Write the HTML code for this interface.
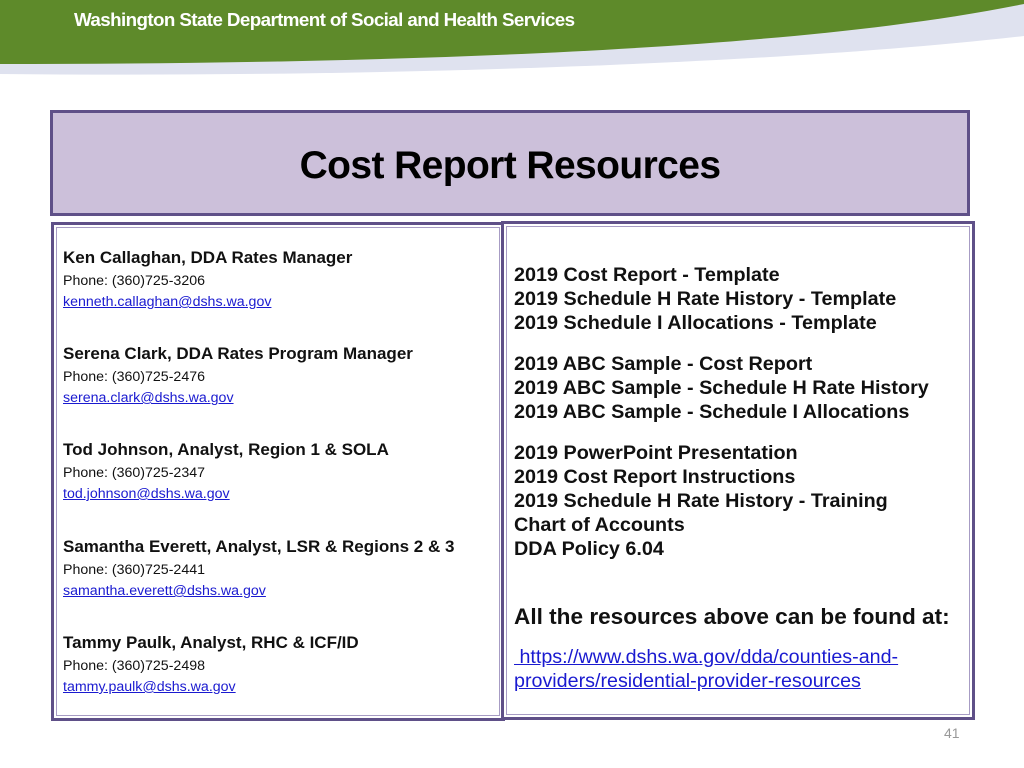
<!DOCTYPE html>
<html><head><style>
body{margin:0;width:1024px;height:768px;background:#fff;position:relative;overflow:hidden;font-family:"Liberation Sans",sans-serif}
.abs{position:absolute}
.box{position:absolute;box-sizing:border-box;border:3px solid #5f5088;box-shadow:inset 0 0 0 2px #fff,inset 0 0 0 3px #a79cc4}
.l p{margin:0;white-space:nowrap}
.n{font-weight:bold;font-size:17px;color:#111}
.ph{font-size:14.2px;color:#111;margin-top:5px!important}
.em{font-size:14.2px;color:#1a1ad0;text-decoration:underline;margin-top:5px!important}
.r div{font-weight:bold;font-size:19.8px;line-height:24px;color:#111;white-space:nowrap}
</style></head><body>
<svg class="abs" style="left:0;top:0" width="1024" height="80">
<path d="M0 0H1024V36C800 62 400 78 0 74Z" fill="#dfe2ef"/>
<path d="M0 0H1024V4C800 50 400 64 0 64Z" fill="#5e8a2a"/>
</svg>
<div class="abs" style="left:74px;top:9px;color:#fff;font-size:18.8px;font-weight:bold;letter-spacing:-0.6px">Washington State Department of Social and Health Services</div>
<div class="abs" style="left:50px;top:110px;width:920px;height:106px;box-sizing:border-box;border:3px solid #5f5088;background:#ccc0da"></div>
<div class="abs" style="left:50px;top:144px;width:920px;text-align:center;font-size:39px;font-weight:bold;color:#000;letter-spacing:-0.6px">Cost Report Resources</div>
<div class="box" style="left:51px;top:222px;width:454px;height:499px"></div>
<div class="box" style="left:501px;top:221px;width:474px;height:499px"></div>
<div class="abs l" style="left:63px;top:248px">
<p class="n">Ken Callaghan, DDA Rates Manager</p><p class="ph">Phone: (360)725-3206</p><p class="em">kenneth.callaghan@dshs.wa.gov</p>
</div>
<div class="abs l" style="left:63px;top:344px">
<p class="n">Serena Clark, DDA Rates Program Manager</p><p class="ph">Phone: (360)725-2476</p><p class="em">serena.clark@dshs.wa.gov</p>
</div>
<div class="abs l" style="left:63px;top:440px">
<p class="n">Tod Johnson, Analyst, Region 1 &amp; SOLA</p><p class="ph">Phone: (360)725-2347</p><p class="em">tod.johnson@dshs.wa.gov</p>
</div>
<div class="abs l" style="left:63px;top:537px">
<p class="n">Samantha Everett, Analyst, LSR &amp; Regions 2 &amp; 3</p><p class="ph">Phone: (360)725-2441</p><p class="em">samantha.everett@dshs.wa.gov</p>
</div>
<div class="abs l" style="left:63px;top:633px">
<p class="n">Tammy Paulk, Analyst, RHC &amp; ICF/ID</p><p class="ph">Phone: (360)725-2498</p><p class="em">tammy.paulk@dshs.wa.gov</p>
</div>
<div class="abs r" style="left:514px;top:263px">
<div>2019 Cost Report - Template</div><div>2019 Schedule H Rate History - Template</div><div>2019 Schedule I Allocations - Template</div>
</div>
<div class="abs r" style="left:514px;top:352px">
<div>2019 ABC Sample - Cost Report</div><div>2019 ABC Sample - Schedule H Rate History</div><div>2019 ABC Sample - Schedule I Allocations</div>
</div>
<div class="abs r" style="left:514px;top:441px">
<div>2019 PowerPoint Presentation</div><div>2019 Cost Report Instructions</div><div>2019 Schedule H Rate History - Training</div><div>Chart of Accounts</div><div>DDA Policy 6.04</div>
</div>
<div class="abs" style="left:514px;top:604px;font-size:22.6px;font-weight:bold;color:#111;white-space:nowrap">All the resources above can be found at:</div>
<div class="abs" style="left:514px;top:645px;font-size:19.7px;line-height:24px;color:#1a1ad0;text-decoration:underline;white-space:nowrap">&nbsp;https://www.dshs.wa.gov/dda/counties-and-<br>providers/residential-provider-resources</div>
<div class="abs" style="left:944px;top:725px;font-size:14px;color:#999">41</div>
</body></html>
